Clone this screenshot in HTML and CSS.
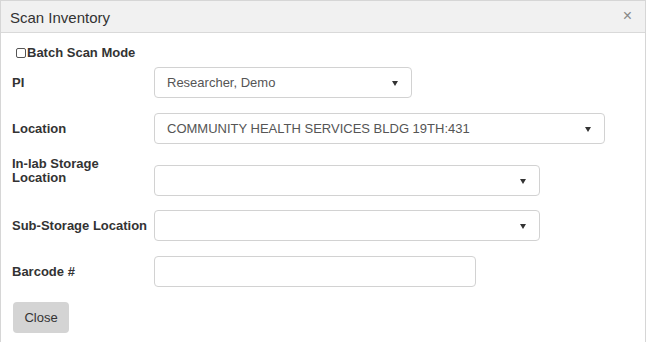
FILE: index.html
```html
<!DOCTYPE html>
<html>
<head>
<meta charset="utf-8">
<link rel="stylesheet" href="styles.css">
</head>
<body>
<div class="dialog">
  <div class="dialog-header">
    <span class="title">Scan Inventory</span>
    <span class="close-x">×</span>
  </div>
  <div class="dialog-body">
    <label class="batch"><span class="cb"></span>Batch Scan Mode</label>
    <div class="row">
      <div class="label">PI</div>
      <div class="select w-pi"><span class="val">Researcher, Demo</span><span class="arrow"></span></div>
    </div>
    <div class="row">
      <div class="label">Location</div>
      <div class="select w-loc"><span class="val">COMMUNITY HEALTH SERVICES BLDG 19TH:431</span><span class="arrow"></span></div>
    </div>
    <div class="row row-tall">
      <div class="label label-two">In-lab Storage<br>Location</div>
      <div class="select w-mid push"><span class="val"></span><span class="arrow"></span></div>
    </div>
    <div class="row">
      <div class="label">Sub-Storage Location</div>
      <div class="select w-mid"><span class="val"></span><span class="arrow"></span></div>
    </div>
    <div class="row">
      <div class="label">Barcode #</div>
      <div class="input w-bar"></div>
    </div>
    <button class="btn">Close</button>
  </div>
</div>
</body>
</html>
```
FILE: styles.css
```css
html, body {
  margin: 0;
  padding: 0;
  background: #fff;
}
body {
  font-family: "Liberation Sans", Arial, sans-serif;
  color: #333;
}
.dialog {
  width: 644px;
  height: 360px;
  border: 1px solid #d6d6d6;
  border-bottom: none;
  background: #fff;
}
.dialog-header {
  height: 31px;
  background: #f1f1f1;
  border-bottom: 1px solid #d9d9d9;
  display: flex;
  align-items: center;
  justify-content: space-between;
  padding: 0 13px 0 9px;
}
.title {
  font-size: 15px;
  color: #333;
  margin-top: 1px;
}
.close-x {
  font-size: 16px;
  color: #888;
  line-height: 1;
  margin-top: -2px;
}
.dialog-body {
  padding: 12px 11px 0 11px;
}
.batch {
  display: flex;
  align-items: center;
  font-size: 13px;
  font-weight: bold;
  height: 15px;
  padding-left: 4px;
}
.cb {
  width: 8px;
  height: 8px;
  border: 1px solid #555;
  border-radius: 2px;
  margin-right: 1px;
  background: #fff;
}
.row {
  display: flex;
  align-items: center;
  margin-top: 15px;
}
.batch + .row {
  margin-top: 7px;
}
.row-tall {
  align-items: flex-start;
  margin-top: 13px;
}
.row-tall + .row {
  margin-top: 14px;
}
.label {
  width: 142px;
  flex: none;
  font-size: 13px;
  font-weight: bold;
  color: #333;
}
.label-two {
  line-height: 14px;
}
.select, .input {
  box-sizing: border-box;
  height: 31px;
  border: 1px solid #d2d2d2;
  border-radius: 4px;
  background: #fff;
  display: flex;
  align-items: center;
  justify-content: space-between;
  padding: 0 13px 0 12px;
  font-size: 13px;
  color: #555;
}
.push {
  margin-top: 8px;
}
.w-pi { width: 258px; }
.w-loc { width: 451px; }
.w-mid { width: 386px; }
.w-bar { width: 322px; }
.arrow {
  width: 0;
  height: 0;
  border-left: 3px solid transparent;
  border-right: 3px solid transparent;
  border-top: 5px solid #333;
  margin-top: 1px;
}
.btn {
  margin-top: 15px;
  width: 56px;
  height: 31px;
  border: none;
  border-radius: 4px;
  background: #d4d4d4;
  font-family: "Liberation Sans", Arial, sans-serif;
  font-size: 13px;
  color: #333;
  padding: 0;
  margin-left: 1px;
}
```
